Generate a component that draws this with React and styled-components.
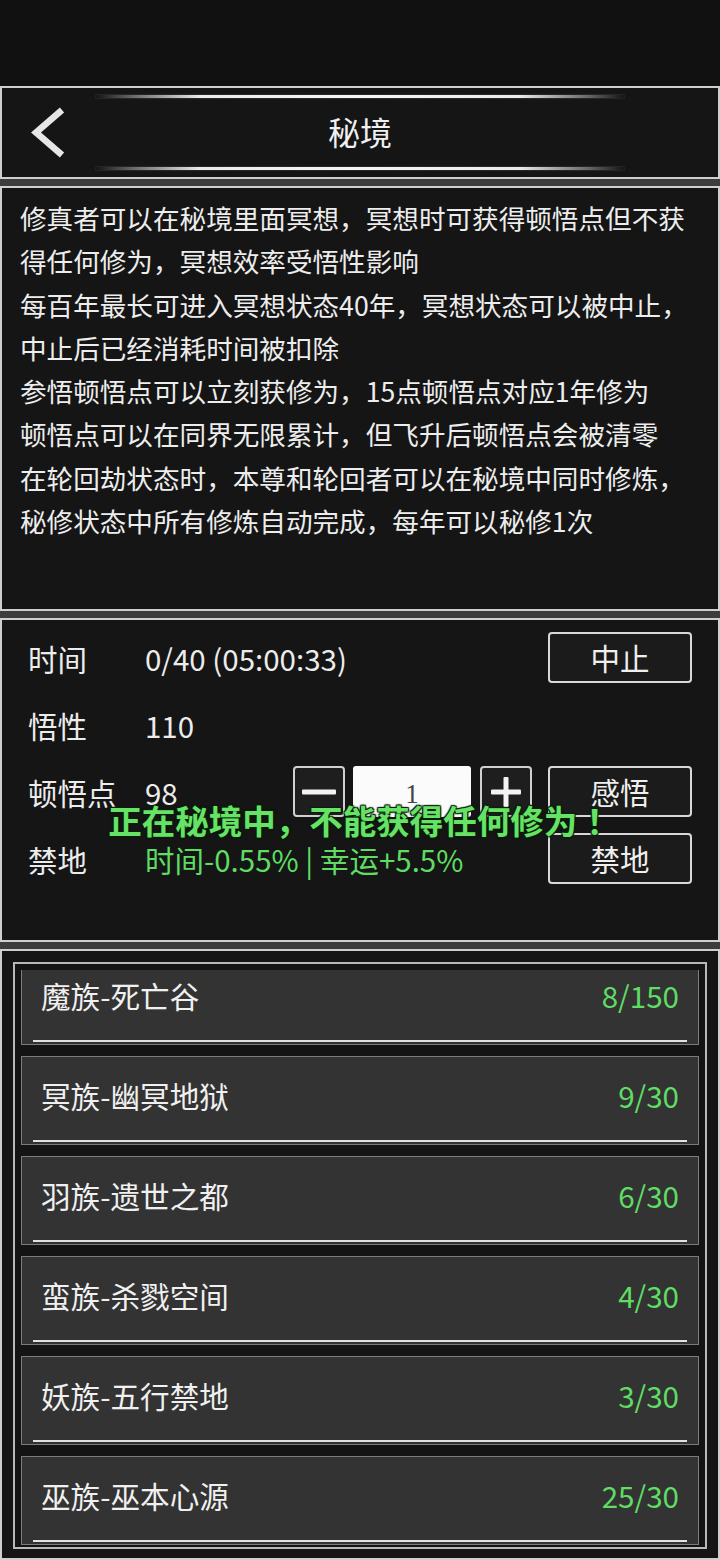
import React, { useLayoutEffect, useRef } from 'react';
import styled, { createGlobalStyle } from 'styled-components';

const GlobalStyle = createGlobalStyle`
  html, body { margin: 0; padding: 0; background: #111111; }
  body { font-family: "Noto Sans CJK SC", "Noto Sans", sans-serif; color: #ececec; }
  * { box-sizing: border-box; }
`;

const GREEN = '#5fdc63';

const Page = styled.div`
  width: 720px;
  height: 1560px;
  display: flex;
  flex-direction: column;
  background: #111111;
  overflow: hidden;
`;

const StatusBar = styled.div`
  height: 86px;
  flex: none;
  background: #111111;
`;

const Stack = styled.div`
  flex: 1;
  min-height: 0;
  display: flex;
  flex-direction: column;
  gap: 7px;
  background: #3d3d3d;
`;

const Panel = styled.section`
  flex: none;
  height: ${(p) => p.$h}px;
  border: 2px solid #cfcfcf;
  background: #151515;
  position: relative;
`;

const HeaderPanel = styled(Panel)`
  display: flex;
  flex-direction: column;
  padding: 7px 0;
`;

const GlowLine = styled.div`
  width: 528px;
  height: 3px;
  margin: 0 auto;
  flex: none;
  background: linear-gradient(
    to right,
    rgba(120, 120, 120, 0) 0%,
    #6a6a6a 7%,
    #ececec 20%,
    #f6f6f6 50%,
    #ececec 80%,
    #6a6a6a 93%,
    rgba(120, 120, 120, 0) 100%
  );
  box-shadow: 0 0 2px rgba(200, 200, 200, 0.35);
`;

const TitleRow = styled.div`
  flex: 1;
  display: grid;
  grid-template-columns: 1fr auto 1fr;
  align-items: center;
`;

const BackButton = styled.button`
  justify-self: start;
  margin-left: 27px;
  padding: 0;
  border: none;
  background: none;
  display: flex;
  align-items: center;
  cursor: pointer;
`;

const Title = styled.h1`
  margin: 0 0 4px;
  font-size: 32px;
  font-weight: 400;
  color: #f0f0f0;
  line-height: 1;
`;

const DescPanel = styled(Panel)`
  padding: 8px 16px 0 18px;
`;

const DescLine = styled.p`
  margin: 0;
  font-size: 26.6px;
  line-height: 43.3px;
  color: #ededed;
`;

const StatsPanel = styled(Panel)`
  padding: 4px 26px 0 26px;
  display: flex;
  flex-direction: column;
`;

const StatRow = styled.div`
  height: 67px;
  display: flex;
  align-items: center;
`;

const Label = styled.span`
  width: 117px;
  flex: none;
  font-size: 29.5px;
  color: #ececec;
`;

const Value = styled.span`
  flex: 1;
  font-size: 29.5px;
  color: ${(p) => (p.$green ? GREEN : '#ececec')};
  white-space: nowrap;
`;

const ActionButton = styled.button`
  width: 144px;
  height: 51px;
  flex: none;
  border: 2px solid #d8d8d8;
  border-radius: 4px;
  background: #1b1b1b;
  color: #efefef;
  font-family: inherit;
  font-size: 29.5px;
  line-height: 1;
  padding: 0;
  cursor: pointer;
`;

const Stepper = styled.div`
  display: flex;
  align-items: center;
  gap: 8px;
  margin-right: 16px;
`;

const StepButton = styled.button`
  width: 52px;
  height: 51px;
  border: 2px solid #d0d0d0;
  border-radius: 4px;
  background: #1e1e1e;
  display: flex;
  align-items: center;
  justify-content: center;
  padding: 0;
  cursor: pointer;
`;

const NumberInput = styled.input`
  width: 118px;
  height: 51px;
  margin-right: 1px;
  border: none;
  border-radius: 3px;
  background: #fbfbfb;
  color: #444444;
  text-align: center;
  font-family: "Liberation Serif", "DejaVu Serif", serif;
  font-size: 27px;
  padding: 6px 0 0;
  outline: none;
`;

const Toast = styled.div`
  position: absolute;
  left: 0;
  right: 0;
  top: 180px;
  padding-left: 8px;
  text-align: center;
  font-size: 33.5px;
  font-weight: 700;
  line-height: 40px;
  color: #66e266;
  text-shadow: 0 0 1px #0b2a0b, 1px 1px 1px #0a1f0a, -1px -1px 1px #0a1f0a,
    1px -1px 1px #0a1f0a, -1px 1px 1px #0a1f0a;
  pointer-events: none;
`;

const Bang = styled.span`
  margin-left: 9px;
`;

const ListPanel = styled(Panel)`
  padding: 11px;
`;

const Frame = styled.div`
  height: 587px;
  border: 2px solid #b8b8b8;
  padding: 6px 6px 2px;
  background: #141414;
`;

const Scroller = styled.div`
  height: 100%;
  overflow-y: auto;
  scrollbar-width: none;
  &::-webkit-scrollbar { display: none; }
`;

const ItemList = styled.ul`
  list-style: none;
  margin: 0;
  padding: 0;
  display: flex;
  flex-direction: column;
  gap: 11px;
`;

const Item = styled.li`
  height: 89px;
  border: 1px solid #7c7c7c;
  background: #333333;
  padding: 0 11px;
  display: flex;
  flex-direction: column;
`;

const ItemRow = styled.div`
  height: 76px;
  padding: 0 8px;
  display: flex;
  align-items: center;
  justify-content: space-between;
  font-size: 29.6px;
`;

const ItemName = styled.span`
  color: #f0f0f0;
`;

const ItemCount = styled.span`
  color: ${GREEN};
`;

const Divider = styled.div`
  height: 2px;
  background: #e2e2e2;
  margin-top: 7px;
`;

const Chevron = () => (
  <svg width="40" height="52" viewBox="0 0 40 52">
    <polyline
      points="33,3 7,25.5 33,48"
      fill="none"
      stroke="#e6e6e6"
      strokeWidth="6.5"
      strokeLinecap="butt"
      strokeLinejoin="miter"
    />
  </svg>
);

const MinusIcon = () => (
  <svg width="36" height="36" viewBox="0 0 36 36">
    <rect x="1" y="15.5" width="34" height="5" rx="1" fill="#f3f3f3" />
  </svg>
);

const PlusIcon = () => (
  <svg width="36" height="36" viewBox="0 0 36 36">
    <rect x="3" y="15.5" width="30" height="5" rx="1" fill="#f3f3f3" />
    <rect x="15.5" y="3" width="5" height="30" rx="1" fill="#f3f3f3" />
  </svg>
);

const descLines = [
  '修真者可以在秘境里面冥想，冥想时可获得顿悟点但不获得任何修为，冥想效率受悟性影响',
  '每百年最长可进入冥想状态40年，冥想状态可以被中止，中止后已经消耗时间被扣除',
  '参悟顿悟点可以立刻获修为，15点顿悟点对应1年修为',
  '顿悟点可以在同界无限累计，但飞升后顿悟点会被清零',
  '在轮回劫状态时，本尊和轮回者可以在秘境中同时修炼，',
  '秘修状态中所有修炼自动完成，每年可以秘修1次',
];

const realms = [
  { name: '魔族-死亡谷', count: '8/150' },
  { name: '冥族-幽冥地狱', count: '9/30' },
  { name: '羽族-遗世之都', count: '6/30' },
  { name: '蛮族-杀戮空间', count: '4/30' },
  { name: '妖族-五行禁地', count: '3/30' },
  { name: '巫族-巫本心源', count: '25/30' },
];

export default function App() {
  const scrollRef = useRef(null);
  useLayoutEffect(() => {
    if (scrollRef.current) scrollRef.current.scrollTop = 18;
  }, []);

  return (
    <>
      <GlobalStyle />
      <Page>
        <StatusBar />
        <Stack>
          <HeaderPanel $h={93}>
            <GlowLine />
            <TitleRow>
              <BackButton aria-label="返回">
                <Chevron />
              </BackButton>
              <Title>秘境</Title>
              <span />
            </TitleRow>
            <GlowLine />
          </HeaderPanel>

          <DescPanel $h={425}>
            {descLines.map((t) => (
              <DescLine key={t}>{t}</DescLine>
            ))}
          </DescPanel>

          <StatsPanel $h={324}>
            <StatRow>
              <Label>时间</Label>
              <Value>0/40 (05:00:33)</Value>
              <ActionButton>中止</ActionButton>
            </StatRow>
            <StatRow>
              <Label>悟性</Label>
              <Value>110</Value>
            </StatRow>
            <StatRow>
              <Label>顿悟点</Label>
              <Value>98</Value>
              <Stepper>
                <StepButton aria-label="减少">
                  <MinusIcon />
                </StepButton>
                <NumberInput defaultValue="1" />
                <StepButton aria-label="增加">
                  <PlusIcon />
                </StepButton>
              </Stepper>
              <ActionButton>感悟</ActionButton>
            </StatRow>
            <StatRow>
              <Label>禁地</Label>
              <Value $green>时间-0.55% | 幸运+5.5%</Value>
              <ActionButton>禁地</ActionButton>
            </StatRow>
            <Toast>
              正在秘境中，不能获得任何修为<Bang>！</Bang>
            </Toast>
          </StatsPanel>

          <ListPanel $h={611}>
            <Frame>
              <Scroller ref={scrollRef}>
                <ItemList>
                  {realms.map((r) => (
                    <Item key={r.name}>
                      <ItemRow>
                        <ItemName>{r.name}</ItemName>
                        <ItemCount>{r.count}</ItemCount>
                      </ItemRow>
                      <Divider />
                    </Item>
                  ))}
                </ItemList>
              </Scroller>
            </Frame>
          </ListPanel>
        </Stack>
      </Page>
    </>
  );
}
